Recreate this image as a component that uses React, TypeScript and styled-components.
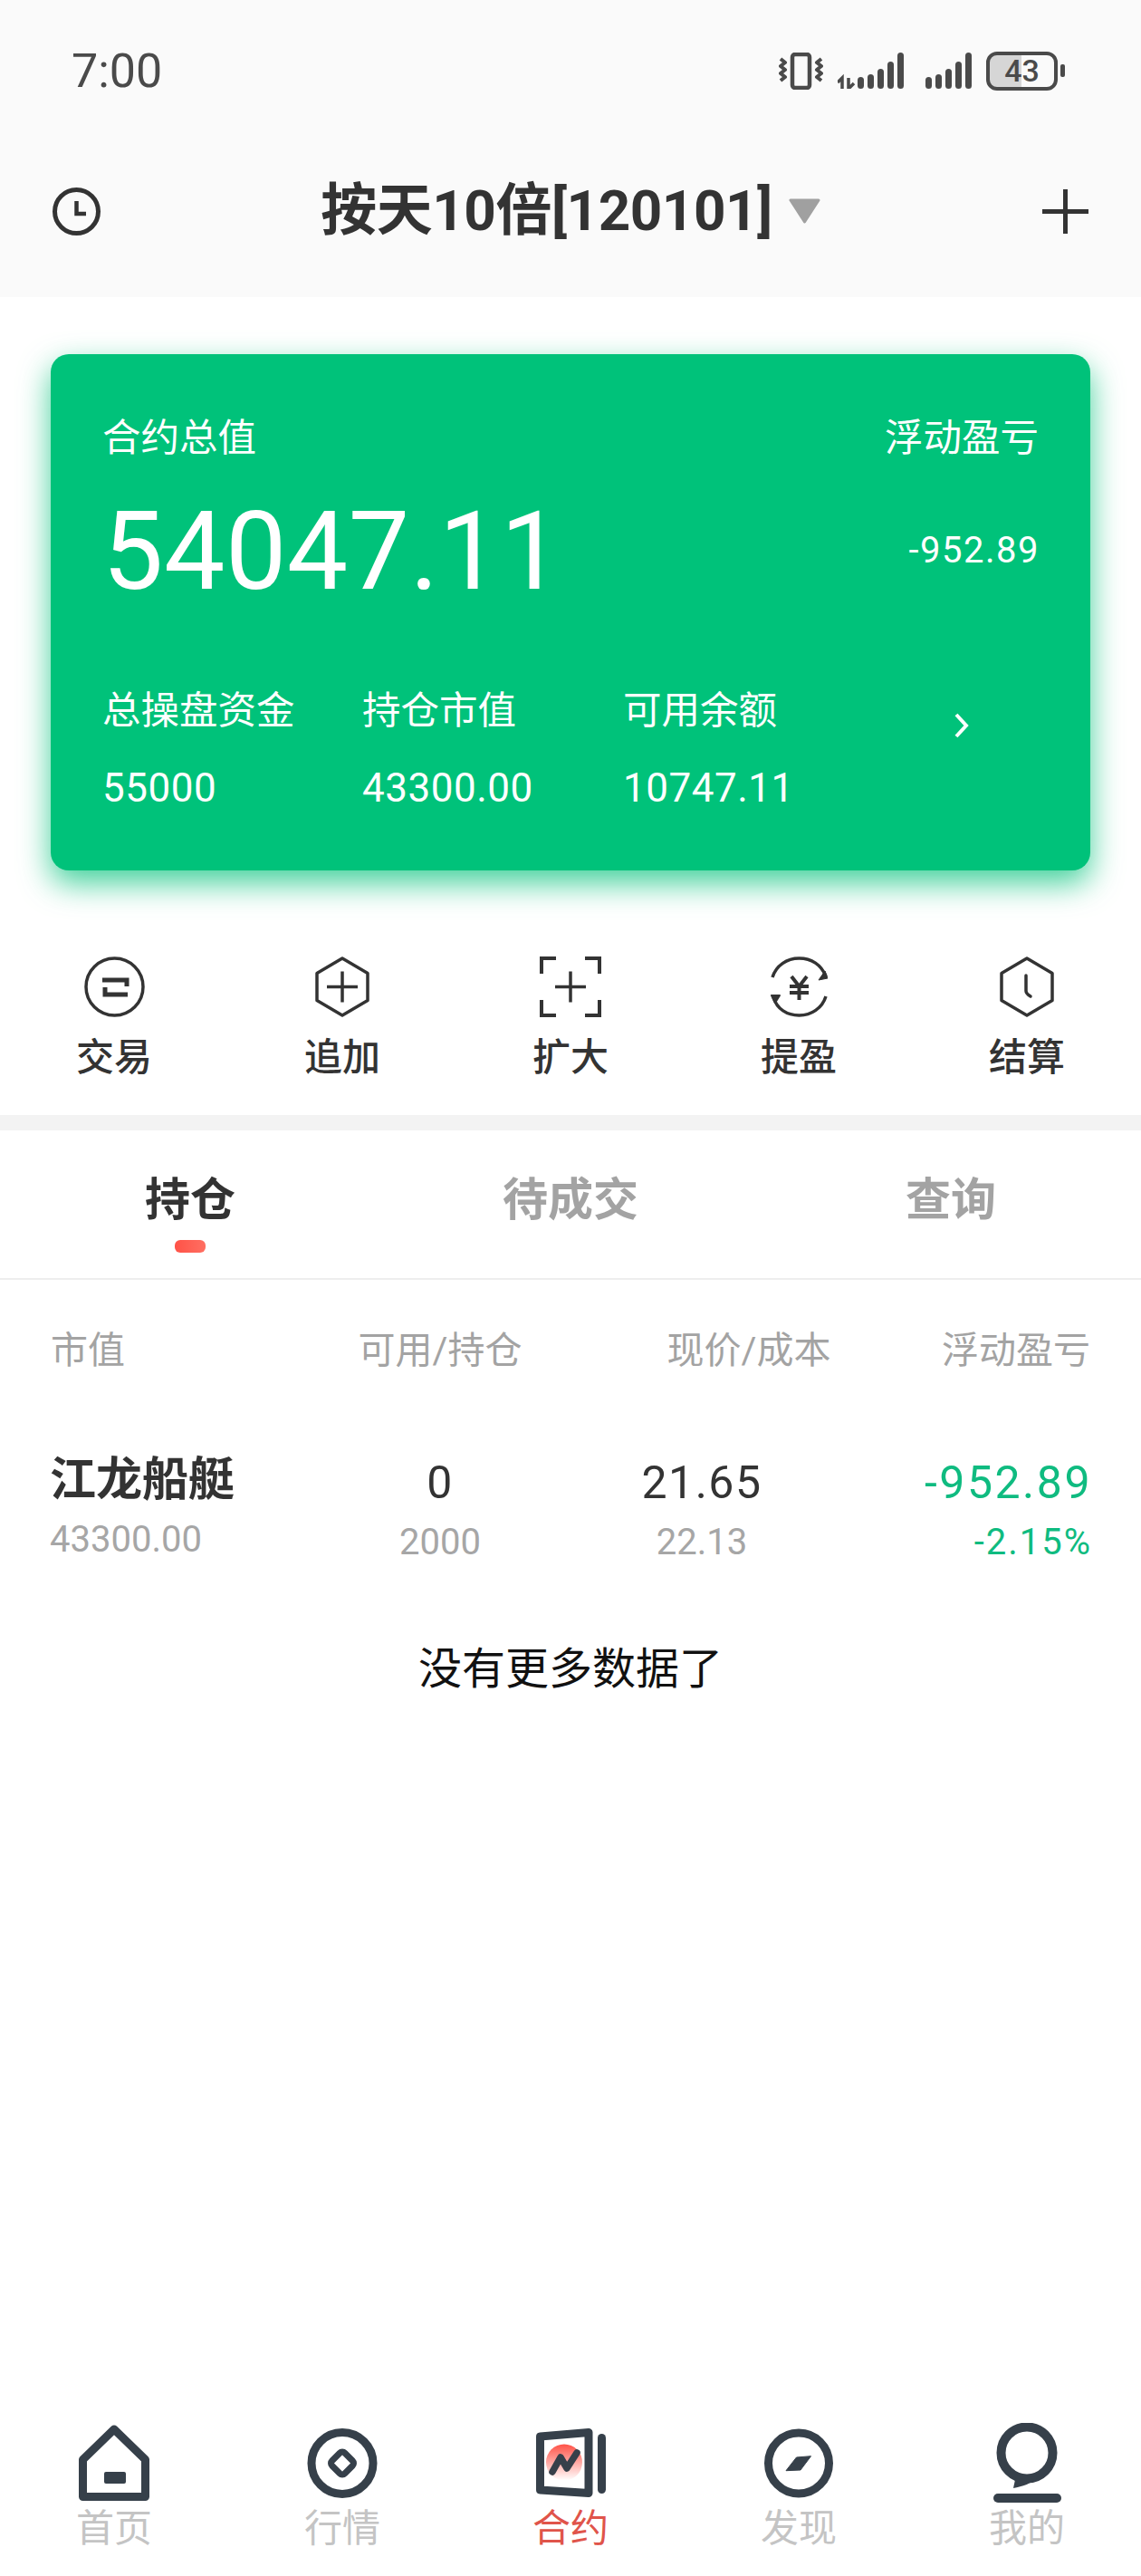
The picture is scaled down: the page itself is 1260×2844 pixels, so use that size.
import React, { ReactElement } from "react";
import styled, { createGlobalStyle } from "styled-components";

const GlobalStyle = createGlobalStyle`
	html, body {
		margin: 0;
		padding: 0;
		background: #ffffff;
	}
	* {
		box-sizing: border-box;
	}
`;

const Page = styled.div`
	width: 1260px;
	height: 2844px;
	display: flex;
	flex-direction: column;
	overflow: hidden;
	background: #ffffff;
	color: #333333;
	font-family: Roboto, "Noto Sans CJK SC", sans-serif;
`;

const Header = styled.header`
	background: #fafafa;
	height: 328px;
	display: flex;
	flex-direction: column;
`;

const StatusBar = styled.div`
	height: 156px;
	padding: 0 84px 0 79px;
	display: flex;
	align-items: center;
	justify-content: space-between;
	color: #4a4a4a;
`;

const Time = styled.div`
	margin-top: 2px;
	font-size: 52px;
	line-height: 60px;
`;

const StatusIcons = styled.div`
	display: flex;
	align-items: center;
`;

const StatusGap = styled.div<{ $w: number }>`
	width: ${(p) => p.$w}px;
`;

const Battery = styled.div`
	width: 79px;
	height: 43px;
	border: 4px solid #4a4a4a;
	border-radius: 12px;
	background: linear-gradient(90deg, #d6d6d6 49%, transparent 49%);
	display: flex;
	align-items: center;
	justify-content: center;
	font-size: 34px;
	font-weight: 500;
	line-height: 35px;
`;

const BatteryNub = styled.div`
	width: 5px;
	height: 14px;
	margin-left: 3px;
	border-radius: 2px;
	background: #4a4a4a;
`;

const TitleBar = styled.div`
	height: 172px;
	padding: 0 58px 18px;
	display: grid;
	grid-template-columns: 1fr auto 1fr;
	align-items: center;
`;

const Title = styled.div`
	display: flex;
	align-items: center;
	gap: 18px;
	font-size: 62px;
	font-weight: 700;
	line-height: 80px;
	letter-spacing: -0.5px;
	color: #333333;
`;

const PlusSlot = styled.div`
	display: flex;
	justify-content: flex-end;
`;

const Card = styled.section`
	margin: 63px 56px 0;
	height: 570px;
	padding: 63px 57px 0;
	border-radius: 20px;
	background: #00c27a;
	box-shadow: 0 14px 34px rgba(0, 194, 122, 0.75);
	color: #ffffff;
`;

const CardTop = styled.div`
	display: flex;
	justify-content: space-between;
	font-size: 42.5px;
	line-height: 60px;
`;

const CardMiddle = styled.div`
	margin-top: 30px;
	height: 130px;
	display: flex;
	align-items: center;
	justify-content: space-between;
`;

const Total = styled.div`
	font-size: 120px;
	line-height: 130px;
	letter-spacing: 0.5px;
`;

const Float = styled.div`
	margin: -2px -1px 0 0;
	font-size: 40px;
	line-height: 50px;
	letter-spacing: 1.5px;
`;

const Stats = styled.div`
	margin-top: 81px;
	display: grid;
	grid-template-columns: 287px 288px 288px 1fr;
`;

const Stat = styled.div`
	display: flex;
	flex-direction: column;
	gap: 25px;
`;

const StatLabel = styled.div`
	font-size: 42.5px;
	line-height: 60px;
`;

const StatValue = styled.div`
	font-size: 44px;
	line-height: 60px;
	letter-spacing: 0.5px;
`;

const StatArrow = styled.div`
	padding-top: 32px;
	display: flex;
	justify-content: center;
`;

const Actions = styled.nav`
	padding: 95px 0 38px;
	display: grid;
	grid-template-columns: repeat(5, 1fr);
`;

const Action = styled.div`
	display: flex;
	flex-direction: column;
	align-items: center;
	gap: 20px;
`;

const ActionIcon = styled.div`
	height: 67px;
	display: flex;
	justify-content: center;
`;

const ActionLabel = styled.div`
	font-size: 42px;
	font-weight: 500;
	line-height: 50px;
	color: #333333;
`;

const Band = styled.div`
	height: 17px;
	background: #f3f3f3;
`;

const Tabs = styled.div`
	height: 165px;
	padding-top: 47px;
	border-bottom: 2px solid #eeeeee;
	display: grid;
	grid-template-columns: repeat(3, 1fr);
`;

const Tab = styled.div<{ $active?: boolean }>`
	display: flex;
	flex-direction: column;
	align-items: center;
	font-size: 50px;
	font-weight: 700;
	line-height: 60px;
	color: ${(p) => (p.$active ? "#333333" : "#a3a3a3")};
`;

const TabMark = styled.div`
	width: 34px;
	height: 14px;
	margin-top: 14px;
	border-radius: 6px;
	background: linear-gradient(90deg, #ff5247, #ff6f62);
`;

const HeadRow = styled.div`
	padding: 48px 56px 0;
	display: grid;
	grid-template-columns: 260px 340px 342px 1fr;
	font-size: 41px;
	line-height: 60px;
	color: #a3a3a3;
`;

const DataRow = styled.div`
	padding: 78px 56px 0;
	display: grid;
	grid-template-columns: 260px 340px 238px 1fr;
`;

const Cell = styled.div<{ $align?: "left" | "center" | "right" }>`
	text-align: ${(p) => p.$align || "center"};
`;

const NameCell = styled.div`
	margin-left: -1px;
	display: flex;
	flex-direction: column;
	gap: 6px;
`;

const ValueCell = styled.div<{ $align?: "center" | "right"; $green?: boolean }>`
	padding-top: 3px;
	margin-right: ${(p) => (p.$align === "right" ? "-2px" : "0")};
	display: flex;
	flex-direction: column;
	gap: 6px;
	text-align: ${(p) => p.$align || "center"};
	color: ${(p) => (p.$green ? "#0fbb80" : "#333333")};
`;

const Name = styled.div`
	font-size: 51px;
	font-weight: 700;
	line-height: 70px;
	white-space: nowrap;
`;

const Main = styled.div<{ $wide?: boolean }>`
	font-size: 50px;
	line-height: 70px;
	letter-spacing: ${(p) => (p.$wide ? "2.5px" : "1.5px")};
`;

const Sub = styled.div<{ $green?: boolean }>`
	font-size: 40px;
	line-height: 50px;
	letter-spacing: ${(p) => (p.$green ? "2px" : "0")};
	color: ${(p) => (p.$green ? "#0fbb80" : "#a6a6a6")};
`;

const NoMore = styled.div`
	margin-top: 85px;
	text-align: center;
	font-size: 48px;
	line-height: 60px;
	color: #111111;
`;

const BottomNav = styled.nav`
	margin-top: auto;
	padding-bottom: 27px;
	display: grid;
	grid-template-columns: repeat(5, 1fr);
`;

const NavItem = styled.div`
	display: flex;
	flex-direction: column;
	align-items: center;
`;

const NavIcon = styled.div`
	height: 92px;
	margin-bottom: 2px;
	display: flex;
	align-items: center;
	justify-content: center;
`;

const NavLabel = styled.div<{ $active?: boolean }>`
	font-size: 42px;
	line-height: 50px;
	color: ${(p) => (p.$active ? "#e0544a" : "#c4c4c4")};
`;

const DARK = "#36404a";
const INK = "#333333";

const VibrateIcon = () => (
	<svg width="49" height="41" viewBox="0 0 49 41" fill="none" stroke="#4a4a4a">
		<rect x="15" y="2" width="19" height="37" rx="3" strokeWidth="4.5" />
		<path d="M2 7l5 4-5 4 5 4-5 4 5 4-5 4" strokeWidth="4" strokeLinejoin="round" />
		<path d="M47 7l-5 4 5 4-5 4 5 4-5 4 5 4" strokeWidth="4" strokeLinejoin="round" />
	</svg>
);

const SIGNAL_TOPS = [27, 24, 18, 10, 0];

const SignalBars = ({ offset }: { offset: number }) => (
	<>
		{SIGNAL_TOPS.map((top, i) => (
			<rect key={i} x={offset + i * 11} y={top} width="7" height={40 - top} rx="3.5" fill="#4a4a4a" />
		))}
	</>
);

const SignalData = () => (
	<svg width="73" height="40" viewBox="0 0 73 40" fill="none">
		<path d="M0 33l5-5v12M12 28v12l6-6" stroke="#4a4a4a" strokeWidth="3.5" />
		<SignalBars offset={22} />
	</svg>
);

const SignalPlain = () => (
	<svg width="51" height="40" viewBox="0 0 51 40" fill="none">
		<SignalBars offset={0} />
	</svg>
);

const HistoryIcon = () => (
	<svg width="53" height="53" viewBox="0 0 53 53" fill="none" stroke={INK}>
		<circle cx="26.5" cy="26.5" r="24" strokeWidth="5" />
		<path d="M26.5 15v14H37" strokeWidth="4.5" />
	</svg>
);

const TitleCaret = () => (
	<svg width="35" height="28" viewBox="0 0 35 28">
		<path d="M2 2h31L17.5 26z" fill="#a0a0a0" stroke="#a0a0a0" strokeWidth="3" strokeLinejoin="round" />
	</svg>
);

const PlusIcon = () => (
	<svg width="51" height="49" viewBox="0 0 51 49" fill="none" stroke={INK} strokeWidth="5">
		<path d="M0 24.5h51M25.5 0v49" />
	</svg>
);

const CardChevron = () => (
	<svg width="18" height="28" viewBox="0 0 18 28" fill="none" stroke="#ffffff" strokeWidth="4">
		<path d="M3 2l11 12L3 26" />
	</svg>
);

const SwapIcon = () => (
	<svg width="67" height="67" viewBox="0 0 67 67" fill="none" stroke={INK}>
		<circle cx="33.5" cy="33.5" r="31.5" strokeWidth="3.5" />
		<path d="M20 26H47V33" strokeWidth="5" />
		<path d="M23 34V42H48" strokeWidth="5" />
	</svg>
);

const HEX = "M30 2L58 18.5V48.5L30 65L2 48.5V18.5Z";

const AddIcon = () => (
	<svg width="60" height="67" viewBox="0 0 60 67" fill="none" stroke={INK} strokeWidth="3.5">
		<path d={HEX} strokeLinejoin="round" />
		<path d="M13 33.5h34M30 16.5v34" />
	</svg>
);

const ExpandIcon = () => (
	<svg width="68" height="67" viewBox="0 0 68 67" fill="none" stroke={INK}>
		<path d="M18 2H2v17M50 2h16v17M18 65H2V48M50 65h16V48" strokeWidth="4" />
		<path d="M17 33.5h34M34 16.5v34" strokeWidth="3.5" />
	</svg>
);

const ProfitIcon = () => (
	<svg width="63" height="67" viewBox="0 0 63 67" fill="none" stroke={INK}>
		<path d="M2 23C6 10 18 2 31.5 2S56 9 61 22" strokeWidth="3.5" />
		<path d="M61 44C57 57 45 65 31.5 65S7 58 3 45" strokeWidth="3.5" />
		<path d="M63 24L53 26L60 16Z" fill={INK} strokeWidth="1" strokeLinejoin="round" />
		<path d="M1 43L10 43L5 51Z" fill={INK} strokeWidth="2" strokeLinejoin="round" />
		<path d="M23 22l8.500 11 8.500-11M21 33h21M21 40h21M31.500 33v15" strokeWidth="4" />
	</svg>
);

const SettleIcon = () => (
	<svg width="60" height="67" viewBox="0 0 60 67" fill="none" stroke={INK} strokeWidth="3.5">
		<path d={HEX} strokeLinejoin="round" />
		<path d="M29 21v17q0 3 5 6" strokeLinecap="round" />
	</svg>
);

const HomeIcon = () => (
	<svg width="78" height="84" viewBox="0 0 78 84" fill="none">
		<path d="M39 5L4.500 38.500V79.500H73.500V38.500Z" stroke={DARK} strokeWidth="9" strokeLinejoin="round" />
		<rect x="28" y="52" width="24" height="13" rx="2" fill={DARK} />
	</svg>
);

const MarketIcon = () => (
	<svg width="78" height="77" viewBox="0 0 78 77" fill="none" stroke={DARK}>
		<circle cx="39" cy="38.5" r="34" strokeWidth="9" />
		<rect x="29" y="28.500" width="20" height="20" rx="4" strokeWidth="7" transform="rotate(45 39 38.500)" />
	</svg>
);

const ContractIcon = () => (
	<svg width="77" height="76" viewBox="0 0 77 76" fill="none">
		<defs>
			<linearGradient id="contractGlow" x1="0" y1="0" x2="0" y2="1">
				<stop offset="0" stopColor="#ff5247" />
				<stop offset="1" stopColor="#ffffff" />
			</linearGradient>
		</defs>
		<circle cx="31" cy="37.500" r="20" fill="url(#contractGlow)" />
		<path d="M4.500 9L58 4.500V71.500L4.500 68Z" stroke={DARK} strokeWidth="9" strokeLinejoin="round" />
		<rect x="68" y="6" width="9" height="66" rx="4.500" fill={DARK} />
		<path d="M18 48l9-16 7 12 11-17" stroke={DARK} strokeWidth="7.500" strokeLinecap="round" strokeLinejoin="round" />
	</svg>
);

const DiscoverIcon = () => (
	<svg width="76" height="77" viewBox="0 0 76 77" fill="none">
		<circle cx="38" cy="38.500" r="33.500" stroke={DARK} strokeWidth="9" />
		<path d="M24 46.700L35.500 32L51.500 30.700L40 46Z" fill={DARK} stroke={DARK} strokeWidth="1" strokeLinejoin="round" />
	</svg>
);

const MineIcon = () => (
	<svg width="75" height="88" viewBox="0 0 75 88" fill="none">
		<circle cx="37" cy="33" r="28.500" stroke={DARK} strokeWidth="10" />
		<path d="M25 58L22 72C32 70 42 67 50 60Z" fill={DARK} />
		<rect x="0" y="78" width="75" height="10" rx="5" fill={DARK} />
	</svg>
);

const ACTIONS = [
	{ label: "交易", icon: <SwapIcon /> },
	{ label: "追加", icon: <AddIcon /> },
	{ label: "扩大", icon: <ExpandIcon /> },
	{ label: "提盈", icon: <ProfitIcon /> },
	{ label: "结算", icon: <SettleIcon /> },
];

const NAV = [
	{ label: "首页", icon: <HomeIcon /> },
	{ label: "行情", icon: <MarketIcon /> },
	{ label: "合约", icon: <ContractIcon />, active: true },
	{ label: "发现", icon: <DiscoverIcon /> },
	{ label: "我的", icon: <MineIcon /> },
];

export default function App(): ReactElement {
	return (
		<Page>
			<GlobalStyle />
			<Header>
				<StatusBar>
					<Time>7:00</Time>
					<StatusIcons>
						<VibrateIcon />
						<StatusGap $w={16} />
						<SignalData />
						<StatusGap $w={24} />
						<SignalPlain />
						<StatusGap $w={16} />
						<Battery>43</Battery>
						<BatteryNub />
					</StatusIcons>
				</StatusBar>
				<TitleBar>
					<HistoryIcon />
					<Title>
						<span>按天10倍[120101]</span>
						<TitleCaret />
					</Title>
					<PlusSlot>
						<PlusIcon />
					</PlusSlot>
				</TitleBar>
			</Header>

			<Card>
				<CardTop>
					<span>合约总值</span>
					<span>浮动盈亏</span>
				</CardTop>
				<CardMiddle>
					<Total>54047.11</Total>
					<Float>-952.89</Float>
				</CardMiddle>
				<Stats>
					<Stat>
						<StatLabel>总操盘资金</StatLabel>
						<StatValue>55000</StatValue>
					</Stat>
					<Stat>
						<StatLabel>持仓市值</StatLabel>
						<StatValue>43300.00</StatValue>
					</Stat>
					<Stat>
						<StatLabel>可用余额</StatLabel>
						<StatValue>10747.11</StatValue>
					</Stat>
					<StatArrow>
						<CardChevron />
					</StatArrow>
				</Stats>
			</Card>

			<Actions>
				{ACTIONS.map((a) => (
					<Action key={a.label}>
						<ActionIcon>{a.icon}</ActionIcon>
						<ActionLabel>{a.label}</ActionLabel>
					</Action>
				))}
			</Actions>
			<Band />

			<Tabs>
				<Tab $active>
					持仓
					<TabMark />
				</Tab>
				<Tab>待成交</Tab>
				<Tab>查询</Tab>
			</Tabs>

			<HeadRow>
				<Cell $align="left">市值</Cell>
				<Cell>可用/持仓</Cell>
				<Cell>现价/成本</Cell>
				<Cell $align="right">浮动盈亏</Cell>
			</HeadRow>
			<DataRow>
				<NameCell>
					<Name>江龙船艇</Name>
					<Sub>43300.00</Sub>
				</NameCell>
				<ValueCell>
					<Main>0</Main>
					<Sub>2000</Sub>
				</ValueCell>
				<ValueCell>
					<Main>21.65</Main>
					<Sub>22.13</Sub>
				</ValueCell>
				<ValueCell $align="right" $green>
					<Main $wide>-952.89</Main>
					<Sub $green>-2.15%</Sub>
				</ValueCell>
			</DataRow>
			<NoMore>没有更多数据了</NoMore>

			<BottomNav>
				{NAV.map((n) => (
					<NavItem key={n.label}>
						<NavIcon>{n.icon}</NavIcon>
						<NavLabel $active={n.active}>{n.label}</NavLabel>
					</NavItem>
				))}
			</BottomNav>
		</Page>
	);
}
